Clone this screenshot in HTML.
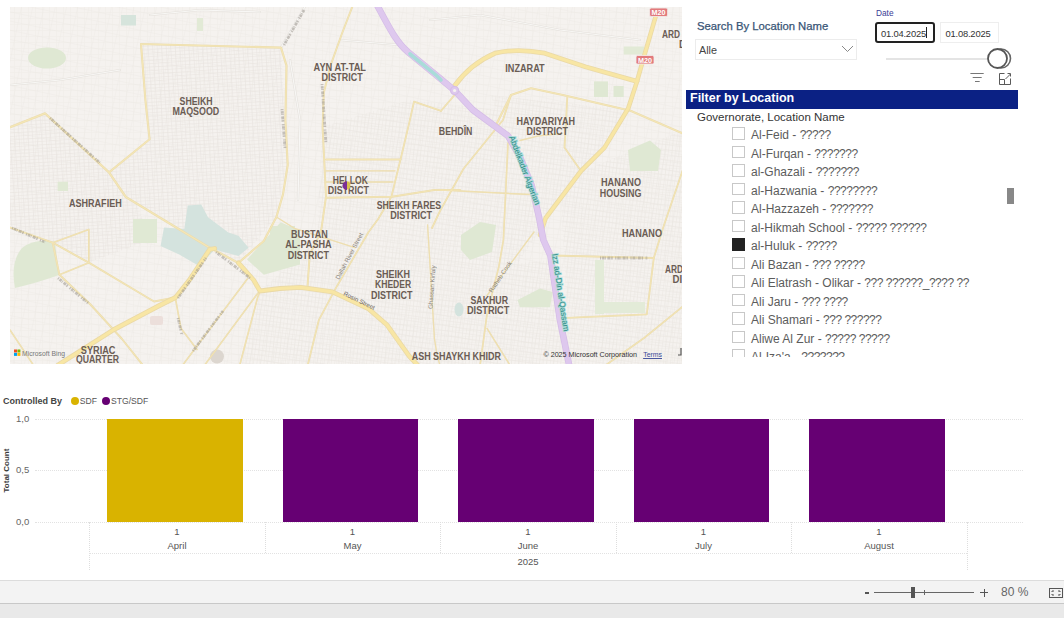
<!DOCTYPE html>
<html><head><meta charset="utf-8">
<style>
*{margin:0;padding:0;box-sizing:border-box}
html,body{width:1064px;height:618px;overflow:hidden;background:#fff;font-family:"Liberation Sans",sans-serif;position:relative}
.a{position:absolute;white-space:nowrap}
#map{position:absolute;left:10px;top:7px;width:672px;height:357px;overflow:hidden;background:#f4f1ed}
#map svg{position:absolute;left:-10px;top:-7px}
.lbl{position:absolute;font-weight:bold;color:#7b6d63;font-size:10px;line-height:10.5px;text-align:center;white-space:nowrap;transform:translateX(-50%)}
.row{position:absolute;left:732px;height:18px;font-size:12px;color:#5c5c5c}
.cb{position:absolute;left:-0.5px;top:0;width:13.5px;height:12.8px;border:1px solid #c8c8c8;background:#fff}
.row span{position:absolute;left:19px;top:1px;white-space:nowrap}
.q{letter-spacing:-0.5px}
.grid{position:absolute;height:0;border-top:1px dotted #e2e2e2}
.vsep{position:absolute;width:0;border-left:1px dotted #dedede}
.bar{position:absolute;top:419px;height:103px;background:#660073}
.xl{position:absolute;font-size:9.5px;color:#555;text-align:center;transform:translateX(-50%);white-space:nowrap}
</style></head>
<body>
<div id="map"><svg width="1064" height="618" viewBox="0 0 1064 618">
<defs><pattern id="st" width="7" height="6" patternUnits="userSpaceOnUse"><path d="M0,0.5H7M0.5,0V6" stroke="#ebe7e2" stroke-width="0.6" fill="none"/></pattern><pattern id="st2" width="11" height="9" patternUnits="userSpaceOnUse" patternTransform="rotate(12)"><path d="M0,0.5H11M0.5,0V9" stroke="#e9e5e0" stroke-width="0.6" fill="none"/></pattern><pattern id="fine" width="4.5" height="3.5" patternUnits="userSpaceOnUse" patternTransform="rotate(-4)"><path d="M0,0.5H4.5M0.5,0V3.5" stroke="#e8e4df" stroke-width="0.55" fill="none"/></pattern><pattern id="fine2" width="3.5" height="5" patternUnits="userSpaceOnUse" patternTransform="rotate(8)"><path d="M0,0.5H3.5M0.5,0V5" stroke="#e8e4df" stroke-width="0.55" fill="none"/></pattern></defs>
<rect x="0" y="0" width="1064" height="618" fill="#f5f2ef"/>
<rect x="0" y="0" width="1064" height="618" fill="url(#st)" opacity="0.55"/>
<rect x="0" y="0" width="1064" height="618" fill="url(#st2)" opacity="0.5"/>
<path d="M141,44 L281,47 L287,165 L276,217 L238,263 L208,247 L137,204 L109,172 L150,139Z M10,125 L45,113 L109,172 L137,204 L150,240 L90,262 L52,243 L10,226Z" fill="url(#fine)" opacity="0.9"/>
<path d="M322,127 L409,100 L500,110 L540,140 L540,230 L500,290 L430,340 L320,330 L260,291 L317,240Z M490,95 L630,110 L600,150 L545,218 L520,157 L508,136Z M260,291 L550,260 L565,366 L240,366Z M560,180 L684,130 L684,366 L570,366Z" fill="url(#fine2)" opacity="0.75"/>
<ellipse cx="47" cy="58" rx="19" ry="10.5" fill="#dfe8d3"/>
<rect x="121" y="15" width="15" height="10.5" fill="#d6e4dc"/>
<path d="M15,288 Q10,262 22,248 Q35,238 55,242 L59,275 Q40,282 15,288Z" fill="#dfe8d3"/>
<rect x="133" y="219" width="24" height="24" fill="#e0e9d4"/>
<path d="M187.7,205.4 L201.2,204.5 L208,217.2 L228.3,232.4 L238.4,235.8 L248.6,247.7 L238.4,256 L214.7,249.4 L199.5,266.3 L179.2,254.4 L160.6,246 L164,227.4 L184.3,229Z" fill="#d4e3de"/>
<path d="M247,259.5 L280.7,222.3 L300,230.8 L300,264.6 L263.8,274.7Z" fill="#dfe8d3"/>
<rect x="594" y="81.4" width="14" height="15.6" fill="#dfe8d3"/>
<rect x="613.5" y="86" width="10.2" height="11" fill="#dfe8d3"/>
<rect x="623.7" y="46.5" width="20.3" height="8" fill="#e2ead6"/>
<path d="M628,150 L650,140.5 L661,150 L658,171 L630,171Z" fill="#dfe8d3"/>
<path d="M461,235 L480,222 L496,225 L492,252 L470,260 L461,250Z" fill="#dfe8d3"/>
<path d="M517.5,300 L540,288.4 L552.8,292 L550,307.2 L520,307.2Z" fill="#dfe8d3"/>
<rect x="595" y="260" width="9" height="54" fill="#e3ebd8"/>
<rect x="595" y="302" width="50" height="11" fill="#e3ebd8"/>
<ellipse cx="459" cy="309.5" rx="4.5" ry="7" fill="#d4e3de"/>
<circle cx="217" cy="356.5" r="7" fill="#dcd6cf"/>
<rect x="150" y="316" width="13" height="9" rx="2" fill="#ecdfdb"/>
<rect x="197" y="18" width="6" height="13" fill="#e2ead6"/>
<rect x="57.6" y="181.7" width="10.4" height="9.3" fill="#e0e9d4"/>
<rect x="270" y="226" width="25" height="14" fill="#dfe8d3"/>
<path d="M306,5 L281,47.6" fill="none" stroke="#e4e0db" stroke-width="2.2" stroke-linecap="round"/>
<path d="M306,5 L281,47.6" fill="none" stroke="#f8f7f5" stroke-width="1.2" stroke-linecap="round"/>
<path d="M10,85 L60,80 L120,70" fill="none" stroke="#e4e0db" stroke-width="2.2" stroke-linecap="round"/>
<path d="M10,85 L60,80 L120,70" fill="none" stroke="#f8f7f5" stroke-width="1.2" stroke-linecap="round"/>
<path d="M150,15 L200,10 L260,12" fill="none" stroke="#e4e0db" stroke-width="2.2" stroke-linecap="round"/>
<path d="M150,15 L200,10 L260,12" fill="none" stroke="#f8f7f5" stroke-width="1.2" stroke-linecap="round"/>
<path d="M340,40 L400,45 L420,60" fill="none" stroke="#e4e0db" stroke-width="2.2" stroke-linecap="round"/>
<path d="M340,40 L400,45 L420,60" fill="none" stroke="#f8f7f5" stroke-width="1.2" stroke-linecap="round"/>
<path d="M430,20 L480,15 L560,30 L640,40" fill="none" stroke="#e4e0db" stroke-width="2.2" stroke-linecap="round"/>
<path d="M430,20 L480,15 L560,30 L640,40" fill="none" stroke="#f8f7f5" stroke-width="1.2" stroke-linecap="round"/>
<path d="M290,60 L300,120 L298,200" fill="none" stroke="#e4e0db" stroke-width="2.2" stroke-linecap="round"/>
<path d="M290,60 L300,120 L298,200" fill="none" stroke="#f8f7f5" stroke-width="1.2" stroke-linecap="round"/>
<path d="M8,128 L45,113.4 L109,172.4 L125.8,197 L137,203.7 L208,246.8 L238.4,262.9" fill="none" stroke="#ebdcae" stroke-width="2.28" stroke-linejoin="round" stroke-linecap="round"/>
<path d="M109,172.4 L149.6,139.3 L145.4,100 L141,44 L281,47.6 L286.5,65.6 L285.4,120 L287.7,165 L283,194.4 L276.4,217 L263.8,241 L238.4,262.9" fill="none" stroke="#ebdcae" stroke-width="2.12" stroke-linejoin="round" stroke-linecap="round"/>
<path d="M10,330 L34,366" fill="none" stroke="#ebdcae" stroke-width="1.64" stroke-linejoin="round" stroke-linecap="round"/>
<path d="M8,226.7 L52.7,242.7 L88.8,262.7 L154,301.5 L175.5,297.5" fill="none" stroke="#ebdcae" stroke-width="1.96" stroke-linejoin="round" stroke-linecap="round"/>
<path d="M52.7,242.7 L59.4,274.8 L90,304 L122,339 L143.5,366" fill="none" stroke="#ebdcae" stroke-width="1.96" stroke-linejoin="round" stroke-linecap="round"/>
<path d="M52.7,242.7 L88.8,229.4 L88.8,262.7 M88.8,262.7 L59.4,274.8" fill="none" stroke="#ebdcae" stroke-width="1.64" stroke-linejoin="round" stroke-linecap="round"/>
<path d="M175.5,298.8 L180.9,328.2 L197,349.5" fill="none" stroke="#ebdcae" stroke-width="1.64" stroke-linejoin="round" stroke-linecap="round"/>
<path d="M182,366 L247.5,278.8" fill="none" stroke="#ebdcae" stroke-width="1.64" stroke-linejoin="round" stroke-linecap="round"/>
<path d="M204,366 L258,293" fill="none" stroke="#ebdcae" stroke-width="1.64" stroke-linejoin="round" stroke-linecap="round"/>
<path d="M239.5,366 L257.6,297.5 L260,291" fill="none" stroke="#ebdcae" stroke-width="1.64" stroke-linejoin="round" stroke-linecap="round"/>
<path d="M353,5 L341.8,34 L330.5,65.6 L323.8,92.7 L322.6,127 L326,196.7 L321.5,228.3 L317,240 L309.7,254.5 L307.5,287" fill="none" stroke="#ebdcae" stroke-width="1.96" stroke-linejoin="round" stroke-linecap="round"/>
<path d="M326,159.5 L400.5,159.5" fill="none" stroke="#ebdcae" stroke-width="2.12" stroke-linejoin="round" stroke-linecap="round"/>
<path d="M326,197.8 L392,196.7 L434.3,190 L460,190" fill="none" stroke="#ebdcae" stroke-width="1.96" stroke-linejoin="round" stroke-linecap="round"/>
<path d="M441,110.8 L414,101.7 L408.5,126 L400.5,159.5 L391.4,196.7 L378,219.3 L368.6,232 L336.9,286.2 L318.8,320.2 L307.5,366" fill="none" stroke="#ebdcae" stroke-width="1.80" stroke-linejoin="round" stroke-linecap="round"/>
<path d="M454.6,95 L441,110.8" fill="none" stroke="#ebdcae" stroke-width="1.80" stroke-linejoin="round" stroke-linecap="round"/>
<path d="M495,127 L511,95 L531,88.2 L562.8,95 L630.5,110.8 L684,134" fill="none" stroke="#ebdcae" stroke-width="2.12" stroke-linejoin="round" stroke-linecap="round"/>
<path d="M511,95 L503,120 L463.5,168.7 L440,211 L432,228" fill="none" stroke="#ebdcae" stroke-width="1.80" stroke-linejoin="round" stroke-linecap="round"/>
<path d="M567.3,97.2 L564.5,147.6 L581,171" fill="none" stroke="#ebdcae" stroke-width="1.80" stroke-linejoin="round" stroke-linecap="round"/>
<path d="M508,143 L503.4,240 L498.7,267.3 L487,314.3 L480,366" fill="none" stroke="#ebdcae" stroke-width="1.64" stroke-linejoin="round" stroke-linecap="round"/>
<path d="M440,190 L531.6,194.6" fill="none" stroke="#ebdcae" stroke-width="1.48" stroke-linejoin="round" stroke-linecap="round"/>
<path d="M684,166.4 L663.2,227.5 L653.8,258 L646.8,314.3 L566.9,317.8" fill="none" stroke="#ebdcae" stroke-width="1.80" stroke-linejoin="round" stroke-linecap="round"/>
<path d="M552.8,255.5 L653.8,258" fill="none" stroke="#ebdcae" stroke-width="1.80" stroke-linejoin="round" stroke-linecap="round"/>
<path d="M684,305.5 L644.4,337.8 L604.5,366" fill="none" stroke="#ebdcae" stroke-width="1.80" stroke-linejoin="round" stroke-linecap="round"/>
<path d="M487,295.5 L534,232" fill="none" stroke="#ebdcae" stroke-width="1.32" stroke-linejoin="round" stroke-linecap="round"/>
<path d="M487,328.4 L510.5,366" fill="none" stroke="#ebdcae" stroke-width="1.48" stroke-linejoin="round" stroke-linecap="round"/>
<path d="M427.6,225 L434.4,338.3 L436.6,351.9 L440,366" fill="none" stroke="#ebdcae" stroke-width="1.32" stroke-linejoin="round" stroke-linecap="round"/>
<path d="M276.4,217 L294.4,228.3 L355,247.7" fill="none" stroke="#ebdcae" stroke-width="1.32" stroke-linejoin="round" stroke-linecap="round"/>
<path d="M326,170.8 L395,170.8 M326,182 L393,182" fill="none" stroke="#ebdcae" stroke-width="1.32" stroke-linejoin="round" stroke-linecap="round"/>
<path d="M520,140.5 L538.7,135.8 L562,133.5" fill="none" stroke="#ebdcae" stroke-width="1.32" stroke-linejoin="round" stroke-linecap="round"/>
<path d="M8,128 L45,113.4 L109,172.4 L125.8,197 L137,203.7 L208,246.8 L238.4,262.9" fill="none" stroke="#f4e6b6" stroke-width="1.28" stroke-linejoin="round" stroke-linecap="round"/>
<path d="M109,172.4 L149.6,139.3 L145.4,100 L141,44 L281,47.6 L286.5,65.6 L285.4,120 L287.7,165 L283,194.4 L276.4,217 L263.8,241 L238.4,262.9" fill="none" stroke="#f4e6b6" stroke-width="1.12" stroke-linejoin="round" stroke-linecap="round"/>
<path d="M10,330 L34,366" fill="none" stroke="#f4e6b6" stroke-width="0.64" stroke-linejoin="round" stroke-linecap="round"/>
<path d="M8,226.7 L52.7,242.7 L88.8,262.7 L154,301.5 L175.5,297.5" fill="none" stroke="#f4e6b6" stroke-width="0.96" stroke-linejoin="round" stroke-linecap="round"/>
<path d="M52.7,242.7 L59.4,274.8 L90,304 L122,339 L143.5,366" fill="none" stroke="#f4e6b6" stroke-width="0.96" stroke-linejoin="round" stroke-linecap="round"/>
<path d="M52.7,242.7 L88.8,229.4 L88.8,262.7 M88.8,262.7 L59.4,274.8" fill="none" stroke="#f4e6b6" stroke-width="0.64" stroke-linejoin="round" stroke-linecap="round"/>
<path d="M175.5,298.8 L180.9,328.2 L197,349.5" fill="none" stroke="#f4e6b6" stroke-width="0.64" stroke-linejoin="round" stroke-linecap="round"/>
<path d="M182,366 L247.5,278.8" fill="none" stroke="#f4e6b6" stroke-width="0.64" stroke-linejoin="round" stroke-linecap="round"/>
<path d="M204,366 L258,293" fill="none" stroke="#f4e6b6" stroke-width="0.64" stroke-linejoin="round" stroke-linecap="round"/>
<path d="M239.5,366 L257.6,297.5 L260,291" fill="none" stroke="#f4e6b6" stroke-width="0.64" stroke-linejoin="round" stroke-linecap="round"/>
<path d="M353,5 L341.8,34 L330.5,65.6 L323.8,92.7 L322.6,127 L326,196.7 L321.5,228.3 L317,240 L309.7,254.5 L307.5,287" fill="none" stroke="#f4e6b6" stroke-width="0.96" stroke-linejoin="round" stroke-linecap="round"/>
<path d="M326,159.5 L400.5,159.5" fill="none" stroke="#f4e6b6" stroke-width="1.12" stroke-linejoin="round" stroke-linecap="round"/>
<path d="M326,197.8 L392,196.7 L434.3,190 L460,190" fill="none" stroke="#f4e6b6" stroke-width="0.96" stroke-linejoin="round" stroke-linecap="round"/>
<path d="M441,110.8 L414,101.7 L408.5,126 L400.5,159.5 L391.4,196.7 L378,219.3 L368.6,232 L336.9,286.2 L318.8,320.2 L307.5,366" fill="none" stroke="#f4e6b6" stroke-width="0.80" stroke-linejoin="round" stroke-linecap="round"/>
<path d="M454.6,95 L441,110.8" fill="none" stroke="#f4e6b6" stroke-width="0.80" stroke-linejoin="round" stroke-linecap="round"/>
<path d="M495,127 L511,95 L531,88.2 L562.8,95 L630.5,110.8 L684,134" fill="none" stroke="#f4e6b6" stroke-width="1.12" stroke-linejoin="round" stroke-linecap="round"/>
<path d="M511,95 L503,120 L463.5,168.7 L440,211 L432,228" fill="none" stroke="#f4e6b6" stroke-width="0.80" stroke-linejoin="round" stroke-linecap="round"/>
<path d="M567.3,97.2 L564.5,147.6 L581,171" fill="none" stroke="#f4e6b6" stroke-width="0.80" stroke-linejoin="round" stroke-linecap="round"/>
<path d="M508,143 L503.4,240 L498.7,267.3 L487,314.3 L480,366" fill="none" stroke="#f4e6b6" stroke-width="0.64" stroke-linejoin="round" stroke-linecap="round"/>
<path d="M440,190 L531.6,194.6" fill="none" stroke="#f4e6b6" stroke-width="0.48" stroke-linejoin="round" stroke-linecap="round"/>
<path d="M684,166.4 L663.2,227.5 L653.8,258 L646.8,314.3 L566.9,317.8" fill="none" stroke="#f4e6b6" stroke-width="0.80" stroke-linejoin="round" stroke-linecap="round"/>
<path d="M552.8,255.5 L653.8,258" fill="none" stroke="#f4e6b6" stroke-width="0.80" stroke-linejoin="round" stroke-linecap="round"/>
<path d="M684,305.5 L644.4,337.8 L604.5,366" fill="none" stroke="#f4e6b6" stroke-width="0.80" stroke-linejoin="round" stroke-linecap="round"/>
<path d="M487,295.5 L534,232" fill="none" stroke="#f4e6b6" stroke-width="0.32" stroke-linejoin="round" stroke-linecap="round"/>
<path d="M487,328.4 L510.5,366" fill="none" stroke="#f4e6b6" stroke-width="0.48" stroke-linejoin="round" stroke-linecap="round"/>
<path d="M427.6,225 L434.4,338.3 L436.6,351.9 L440,366" fill="none" stroke="#f4e6b6" stroke-width="0.32" stroke-linejoin="round" stroke-linecap="round"/>
<path d="M276.4,217 L294.4,228.3 L355,247.7" fill="none" stroke="#f4e6b6" stroke-width="0.32" stroke-linejoin="round" stroke-linecap="round"/>
<path d="M326,170.8 L395,170.8 M326,182 L393,182" fill="none" stroke="#f4e6b6" stroke-width="0.32" stroke-linejoin="round" stroke-linecap="round"/>
<path d="M520,140.5 L538.7,135.8 L562,133.5" fill="none" stroke="#f4e6b6" stroke-width="0.32" stroke-linejoin="round" stroke-linecap="round"/>
<path d="M58,365 L114,329.5 L159.5,305.5 L175.5,297.5 L189.4,280 L209.7,249.4 L214.7,248.5" fill="none" stroke="#ead9a6" stroke-width="4.81" stroke-linejoin="round" stroke-linecap="round"/>
<path d="M238.4,262.9 L253.6,280 L260,291 L280,288.5 L300.7,287.3 L332.4,291.9 L368.6,308.9 L386.8,324.7 L409.4,356.4 L418.5,366" fill="none" stroke="#ead9a6" stroke-width="4.81" stroke-linejoin="round" stroke-linecap="round"/>
<path d="M454.5,86 Q470,64 495,53.2 Q517,48 544.7,53.2 L585.3,66.8 L637,81.4" fill="none" stroke="#ead9a6" stroke-width="4.81" stroke-linejoin="round" stroke-linecap="round"/>
<path d="M656.4,13.8 L644,56.6 L637,81.4 L628.2,108.5 L604.5,147.6 L581,171 L545.7,218 L540,235" fill="none" stroke="#ead9a6" stroke-width="4.60" stroke-linejoin="round" stroke-linecap="round"/>
<path d="M58,365 L114,329.5 L159.5,305.5 L175.5,297.5 L189.4,280 L209.7,249.4 L214.7,248.5" fill="none" stroke="#f8e6a4" stroke-width="3.21" stroke-linejoin="round" stroke-linecap="round"/>
<path d="M238.4,262.9 L253.6,280 L260,291 L280,288.5 L300.7,287.3 L332.4,291.9 L368.6,308.9 L386.8,324.7 L409.4,356.4 L418.5,366" fill="none" stroke="#f8e6a4" stroke-width="3.21" stroke-linejoin="round" stroke-linecap="round"/>
<path d="M454.5,86 Q470,64 495,53.2 Q517,48 544.7,53.2 L585.3,66.8 L637,81.4" fill="none" stroke="#f8e6a4" stroke-width="3.21" stroke-linejoin="round" stroke-linecap="round"/>
<path d="M656.4,13.8 L644,56.6 L637,81.4 L628.2,108.5 L604.5,147.6 L581,171 L545.7,218 L540,235" fill="none" stroke="#f8e6a4" stroke-width="3.00" stroke-linejoin="round" stroke-linecap="round"/>
<path d="M377,5 C389,27 396,42 408,52 L436,75 L454.6,90.5 L472.9,110 L508,135.8 L520,157 L531.6,185.2 L538.7,215.7 L543.4,240 L550.4,255.5 L559.8,319 L569.5,367" fill="none" stroke="#d4bce6" stroke-width="6.6" stroke-linejoin="round" stroke-linecap="round"/>
<path d="M377,5 C389,27 396,42 408,52 L436,75 L454.6,90.5 L472.9,110 L508,135.8 L520,157 L531.6,185.2 L538.7,215.7 L543.4,240 L550.4,255.5 L559.8,319 L569.5,367" fill="none" stroke="#dec8ee" stroke-width="5.2" stroke-linejoin="round" stroke-linecap="round"/>
<circle cx="454.6" cy="90.5" r="4" fill="#dec8ee" stroke="#d4bce6" stroke-width="1.2"/><circle cx="454.6" cy="90.5" r="1.6" fill="#f5f2ef"/>
<path d="M410,54 L436,75 L441,80" stroke="#a9dcd9" stroke-width="3.6" stroke-linecap="round" fill="none"/>
<path d="M50,118 L100,163" fill="none" stroke="#9d978f" stroke-width="2.8" stroke-dasharray="1.2 0.9 2.5 0.6 0.8 1.4 3 0.8 1.5 2.5" opacity="0.55"/>
<path d="M12,228 L45,242" fill="none" stroke="#9d978f" stroke-width="2.8" stroke-dasharray="1.2 0.9 2.5 0.6 0.8 1.4 3 0.8 1.5 2.5" opacity="0.55"/>
<path d="M58,278 L88,303" fill="none" stroke="#9d978f" stroke-width="2.8" stroke-dasharray="1.2 0.9 2.5 0.6 0.8 1.4 3 0.8 1.5 2.5" opacity="0.55"/>
<path d="M178,298 L206,258" fill="none" stroke="#9d978f" stroke-width="2.8" stroke-dasharray="1.2 0.9 2.5 0.6 0.8 1.4 3 0.8 1.5 2.5" opacity="0.55"/>
<path d="M216,252 L250,278" fill="none" stroke="#9d978f" stroke-width="2.8" stroke-dasharray="1.2 0.9 2.5 0.6 0.8 1.4 3 0.8 1.5 2.5" opacity="0.55"/>
<path d="M193,351 L223,311" fill="none" stroke="#9d978f" stroke-width="2.8" stroke-dasharray="1.2 0.9 2.5 0.6 0.8 1.4 3 0.8 1.5 2.5" opacity="0.55"/>
<path d="M282,109 L285,148" fill="none" stroke="#9d978f" stroke-width="2.8" stroke-dasharray="1.2 0.9 2.5 0.6 0.8 1.4 3 0.8 1.5 2.5" opacity="0.55"/>
<path d="M322,84 L326,144" fill="none" stroke="#9d978f" stroke-width="2.8" stroke-dasharray="1.2 0.9 2.5 0.6 0.8 1.4 3 0.8 1.5 2.5" opacity="0.55"/>
<path d="M284,45 L304,10" fill="none" stroke="#9d978f" stroke-width="2.8" stroke-dasharray="1.2 0.9 2.5 0.6 0.8 1.4 3 0.8 1.5 2.5" opacity="0.55"/>
<path d="M600,258 L648,258" fill="none" stroke="#9d978f" stroke-width="2.8" stroke-dasharray="1.2 0.9 2.5 0.6 0.8 1.4 3 0.8 1.5 2.5" opacity="0.55"/>
<path d="M178,318 L182,335" fill="none" stroke="#9d978f" stroke-width="2.8" stroke-dasharray="1.2 0.9 2.5 0.6 0.8 1.4 3 0.8 1.5 2.5" opacity="0.55"/>
<rect x="649.6" y="8" width="18" height="8.5" rx="1.5" fill="#e27a7c" stroke="#f3f0ee" stroke-width="0.8"/>
<text x="658.6" y="15" font-family="Liberation Sans" font-size="7" font-weight="bold" fill="#fff" text-anchor="middle" textLength="14" lengthAdjust="spacingAndGlyphs">M20</text>
<rect x="636" y="55.5" width="18" height="8.5" rx="1.5" fill="#e27a7c" stroke="#f3f0ee" stroke-width="0.8"/>
<text x="645" y="62.5" font-family="Liberation Sans" font-size="7" font-weight="bold" fill="#fff" text-anchor="middle" textLength="14" lengthAdjust="spacingAndGlyphs">M20</text>
<text x="343" y="295" font-family="Liberation Sans" font-size="6.2" fill="#6f6a60" transform="rotate(26 343 295)">Rosin Street</text>
<text x="339" y="280" font-family="Liberation Sans" font-size="6.2" fill="#8a857c" transform="rotate(-62 339 280)">Dallah River Street</text>
<text x="432.5" y="309" font-family="Liberation Sans" font-size="6.2" fill="#8a857c" transform="rotate(-86 432.5 309)">Ghassan Kirfaly</text>
<text x="492" y="293" font-family="Liberation Sans" font-size="6.2" fill="#8a857c" transform="rotate(-56 492 293)">Ratheb Cook</text>
<text x="509" y="137" font-family="Liberation Sans" font-size="8.2" fill="#2f8a86" stroke="#aadcd8" stroke-width="1.6" paint-order="stroke" transform="rotate(69 509 137)">Abdelkader Algerian</text>
<text x="552" y="254" font-family="Liberation Sans" font-size="8.2" fill="#2f8a86" stroke="#aadcd8" stroke-width="1.6" paint-order="stroke" transform="rotate(81.5 552 254)">Izz ad-Din al-Qassam</text>
<text x="179.6" y="104.8" font-family="Liberation Sans" font-size="10.2" font-weight="bold" fill="#6a5c54" textLength="33.099999999999994" lengthAdjust="spacingAndGlyphs" stroke="#f5f3f0" stroke-width="0" >SHEIKH</text>
<text x="172.4" y="115" font-family="Liberation Sans" font-size="10.2" font-weight="bold" fill="#6a5c54" textLength="46.900000000000006" lengthAdjust="spacingAndGlyphs" stroke="#f5f3f0" stroke-width="0" >MAQSOOD</text>
<text x="313.6" y="71.3" font-family="Liberation Sans" font-size="10.2" font-weight="bold" fill="#6a5c54" textLength="52.39999999999998" lengthAdjust="spacingAndGlyphs" stroke="#f5f3f0" stroke-width="0" >AYN AT-TAL</text>
<text x="321.5" y="81.4" font-family="Liberation Sans" font-size="10.2" font-weight="bold" fill="#6a5c54" textLength="41.10000000000002" lengthAdjust="spacingAndGlyphs" stroke="#f5f3f0" stroke-width="0" >DISTRICT</text>
<text x="505.3" y="72.4" font-family="Liberation Sans" font-size="10.2" font-weight="bold" fill="#6a5c54" textLength="39.400000000000034" lengthAdjust="spacingAndGlyphs" stroke="#f5f3f0" stroke-width="0" >INZARAT</text>
<text x="662" y="37.5" font-family="Liberation Sans" font-size="10.2" font-weight="bold" fill="#6a5c54" textLength="18" lengthAdjust="spacingAndGlyphs" stroke="#f5f3f0" stroke-width="0" >ARD</text>
<text x="679" y="47.6" font-family="Liberation Sans" font-size="10.2" font-weight="bold" fill="#6a5c54" textLength="6.899999999999977" lengthAdjust="spacingAndGlyphs" stroke="#f5f3f0" stroke-width="0" >D</text>
<text x="516.4" y="124.6" font-family="Liberation Sans" font-size="10.2" font-weight="bold" fill="#6a5c54" textLength="58.60000000000002" lengthAdjust="spacingAndGlyphs" stroke="#f5f3f0" stroke-width="0" >HAYDARIYAH</text>
<text x="526.5" y="134.7" font-family="Liberation Sans" font-size="10.2" font-weight="bold" fill="#6a5c54" textLength="41.5" lengthAdjust="spacingAndGlyphs" stroke="#f5f3f0" stroke-width="0" >DISTRICT</text>
<text x="438.8" y="134.5" font-family="Liberation Sans" font-size="10.2" font-weight="bold" fill="#6a5c54" textLength="33.599999999999966" lengthAdjust="spacingAndGlyphs" stroke="#f5f3f0" stroke-width="0" >BEHD&#206;N</text>
<text x="332.8" y="183.6" font-family="Liberation Sans" font-size="10.2" font-weight="bold" fill="#6a5c54" textLength="35.0" lengthAdjust="spacingAndGlyphs" stroke="#f5f3f0" stroke-width="0" >HELLOK</text>
<text x="327.8" y="194" font-family="Liberation Sans" font-size="10.2" font-weight="bold" fill="#6a5c54" textLength="41.099999999999966" lengthAdjust="spacingAndGlyphs" stroke="#f5f3f0" stroke-width="0" >DISTRICT</text>
<text x="69" y="206.5" font-family="Liberation Sans" font-size="10.2" font-weight="bold" fill="#6a5c54" textLength="52.7" lengthAdjust="spacingAndGlyphs" stroke="#f5f3f0" stroke-width="0" >ASHRAFIEH</text>
<text x="376.8" y="209" font-family="Liberation Sans" font-size="10.2" font-weight="bold" fill="#6a5c54" textLength="64.19999999999999" lengthAdjust="spacingAndGlyphs" stroke="#f5f3f0" stroke-width="0" >SHEIKH FARES</text>
<text x="390.3" y="219.3" font-family="Liberation Sans" font-size="10.2" font-weight="bold" fill="#6a5c54" textLength="41.69999999999999" lengthAdjust="spacingAndGlyphs" stroke="#f5f3f0" stroke-width="0" >DISTRICT</text>
<text x="601" y="186.4" font-family="Liberation Sans" font-size="10.2" font-weight="bold" fill="#6a5c54" textLength="40" lengthAdjust="spacingAndGlyphs" stroke="#f5f3f0" stroke-width="0" >HANANO</text>
<text x="599.8" y="197" font-family="Liberation Sans" font-size="10.2" font-weight="bold" fill="#6a5c54" textLength="41.60000000000002" lengthAdjust="spacingAndGlyphs" stroke="#f5f3f0" stroke-width="0" >HOUSING</text>
<text x="622" y="236.8" font-family="Liberation Sans" font-size="10.2" font-weight="bold" fill="#6a5c54" textLength="40" lengthAdjust="spacingAndGlyphs" stroke="#f5f3f0" stroke-width="0" >HANANO</text>
<text x="290.9" y="238" font-family="Liberation Sans" font-size="10.2" font-weight="bold" fill="#6a5c54" textLength="36.900000000000034" lengthAdjust="spacingAndGlyphs" stroke="#f5f3f0" stroke-width="0" >BUSTAN</text>
<text x="285.2" y="248.1" font-family="Liberation Sans" font-size="10.2" font-weight="bold" fill="#6a5c54" textLength="46.5" lengthAdjust="spacingAndGlyphs" stroke="#f5f3f0" stroke-width="0" >AL-PASHA</text>
<text x="287.7" y="258.5" font-family="Liberation Sans" font-size="10.2" font-weight="bold" fill="#6a5c54" textLength="41.30000000000001" lengthAdjust="spacingAndGlyphs" stroke="#f5f3f0" stroke-width="0" >DISTRICT</text>
<text x="376" y="277.8" font-family="Liberation Sans" font-size="10.2" font-weight="bold" fill="#6a5c54" textLength="34" lengthAdjust="spacingAndGlyphs" stroke="#f5f3f0" stroke-width="0" >SHEIKH</text>
<text x="375" y="288" font-family="Liberation Sans" font-size="10.2" font-weight="bold" fill="#6a5c54" textLength="36.19999999999999" lengthAdjust="spacingAndGlyphs" stroke="#f5f3f0" stroke-width="0" >KHEDER</text>
<text x="371" y="298.7" font-family="Liberation Sans" font-size="10.2" font-weight="bold" fill="#6a5c54" textLength="41.39999999999998" lengthAdjust="spacingAndGlyphs" stroke="#f5f3f0" stroke-width="0" >DISTRICT</text>
<text x="665" y="273" font-family="Liberation Sans" font-size="10.2" font-weight="bold" fill="#6a5c54" textLength="18" lengthAdjust="spacingAndGlyphs" stroke="#f5f3f0" stroke-width="0" >ARD</text>
<text x="672.6" y="283.3" font-family="Liberation Sans" font-size="10.2" font-weight="bold" fill="#6a5c54" textLength="9.600000000000023" lengthAdjust="spacingAndGlyphs" stroke="#f5f3f0" stroke-width="0" >DI</text>
<text x="470.5" y="304.2" font-family="Liberation Sans" font-size="10.2" font-weight="bold" fill="#6a5c54" textLength="37.5" lengthAdjust="spacingAndGlyphs" stroke="#f5f3f0" stroke-width="0" >SAKHUR</text>
<text x="467" y="313.8" font-family="Liberation Sans" font-size="10.2" font-weight="bold" fill="#6a5c54" textLength="42.30000000000001" lengthAdjust="spacingAndGlyphs" stroke="#f5f3f0" stroke-width="0" >DISTRICT</text>
<text x="80.8" y="353.5" font-family="Liberation Sans" font-size="10.2" font-weight="bold" fill="#6a5c54" textLength="34.7" lengthAdjust="spacingAndGlyphs" stroke="#f5f3f0" stroke-width="0" >SYRIAC</text>
<text x="76" y="363.4" font-family="Liberation Sans" font-size="10.2" font-weight="bold" fill="#6a5c54" textLength="43" lengthAdjust="spacingAndGlyphs" stroke="#f5f3f0" stroke-width="0" >QUARTER</text>
<text x="411.7" y="360.2" font-family="Liberation Sans" font-size="10.2" font-weight="bold" fill="#6a5c54" textLength="89.30000000000001" lengthAdjust="spacingAndGlyphs" stroke="#f5f3f0" stroke-width="0" >ASH SHAYKH KHIDR</text>
<text x="543.4" y="357" font-family="Liberation Sans" font-size="7.2" fill="#333" textLength="93.6" lengthAdjust="spacingAndGlyphs">&#169; 2025 Microsoft Corporation</text>
<text x="643.2" y="357" font-family="Liberation Sans" font-size="7.2" fill="#3b4a9a" textLength="18.8" lengthAdjust="spacingAndGlyphs" text-decoration="underline">Terms</text>
<line x1="643.2" y1="358.5" x2="662" y2="358.5" stroke="#3b4a9a" stroke-width="0.7"/>
<rect x="14" y="349.5" width="3" height="3" fill="#f25022"/><rect x="17.4" y="349.5" width="3" height="3" fill="#7fba00"/><rect x="14" y="352.9" width="3" height="3" fill="#00a4ef"/><rect x="17.4" y="352.9" width="3" height="3" fill="#ffb900"/>
<text x="22" y="355.5" font-family="Liberation Sans" font-size="6.5" fill="#777" textLength="43" lengthAdjust="spacingAndGlyphs">Microsoft Bing</text>
<path d="M681,348 V355 H678" stroke="#555" stroke-width="1.2" fill="none"/>
<path d="M347,181.2 A4.5,4.4 0 0,0 347,190 Z" fill="#7a2f96"/><path d="M347,181.6 A3.4,3.9 0 0,1 347,189.4 Z" fill="#d6c04e"/>
</svg></div><!--mapend-->

<!-- slicer: search by location -->
<div class="a" style="left:697px;top:20px;font-size:11.3px;color:#395576;-webkit-text-stroke:0.25px #395576">Search By Location Name</div>
<div class="a" style="left:695px;top:39px;width:162px;height:21px;border:1px solid #ececec;background:#fff"></div>
<div class="a" style="left:699px;top:43.5px;font-size:10.8px;color:#444">Alle</div>
<svg class="a" style="left:840px;top:44px" width="16" height="10"><polyline points="2,2 7.5,7.5 13,2" fill="none" stroke="#888" stroke-width="1"/></svg>

<!-- date slicer -->
<div class="a" style="left:876px;top:7.5px;font-size:8.3px;color:#3a3d95">Date</div>
<div class="a" style="left:875px;top:22px;width:60px;height:21px;border:2px solid #222;border-radius:3px;background:#fff"></div>
<div class="a" style="left:881px;top:27.5px;font-size:9.4px;color:#333;letter-spacing:-0.2px">01.04.2025</div><div class="a" style="left:926px;top:27px;width:1px;height:11px;background:#222"></div>
<div class="a" style="left:940px;top:22px;width:59px;height:21px;border:1px solid #eeeeee;background:#fff"></div>
<div class="a" style="left:945.5px;top:27.5px;font-size:9.4px;color:#333;letter-spacing:-0.2px">01.08.2025</div>
<div class="a" style="left:886px;top:58px;width:104px;height:2px;background:#e4e4e4"></div>
<svg class="a" style="left:980px;top:44px" width="36" height="30">
 <circle cx="21" cy="14.5" r="9.5" fill="#fff" stroke="#666" stroke-width="1.6"/>
 <circle cx="17.5" cy="14.5" r="9.5" fill="#fff" stroke="#555" stroke-width="1.8"/>
</svg>
<svg class="a" style="left:968px;top:70px" width="50" height="18">
 <g stroke="#777" stroke-width="1" fill="none">
 <line x1="2.4" y1="3.5" x2="15.7" y2="3.5"/><line x1="4.7" y1="7.5" x2="13.7" y2="7.5"/><line x1="7" y1="11.5" x2="11.7" y2="11.5"/>
 </g>
 <g stroke="#5a5a5a" stroke-width="1" fill="none">
 <path d="M36.5,3.5 H31.5 V14.5 H42.5 V8.5"/><path d="M31.5,9.5 H36.5 V14.5"/><path d="M37.5,9 L42.5,4 M39.5,3.5 H42.5 V6.5"/>
 </g>
</svg>

<!-- filter by location -->
<div class="a" style="left:686px;top:90px;width:332px;height:19px;background:#0b2184"></div>
<div class="a" style="left:690px;top:91px;font-size:12.5px;font-weight:bold;color:#fff">Filter by Location</div>
<div class="a" style="left:697px;top:111px;font-size:11.5px;color:#333">Governorate, Location Name</div>
<div class="a" style="left:1007px;top:188px;width:7px;height:16px;background:#888"></div>

<div class="row" style="top:127px"><div class="cb"></div><span>Al-Feid - <i class="q" style="font-style:normal">?????</i></span></div>
<div class="row" style="top:145.5px"><div class="cb"></div><span>Al-Furqan - <i class="q" style="font-style:normal">???????</i></span></div>
<div class="row" style="top:164px"><div class="cb"></div><span>al-Ghazali - <i class="q" style="font-style:normal">???????</i></span></div>
<div class="row" style="top:182.5px"><div class="cb"></div><span>al-Hazwania - <i class="q" style="font-style:normal">????????</i></span></div>
<div class="row" style="top:201px"><div class="cb"></div><span>Al-Hazzazeh - <i class="q" style="font-style:normal">???????</i></span></div>
<div class="row" style="top:219.5px"><div class="cb"></div><span>al-Hikmah School - <i class="q" style="font-style:normal">????? ??????</i></span></div>
<div class="row" style="top:238px"><div class="cb" style="background:#222;border-color:#222"></div><span>al-Huluk - <i class="q" style="font-style:normal">?????</i></span></div>
<div class="row" style="top:256.5px"><div class="cb"></div><span>Ali Bazan - <i class="q" style="font-style:normal">??? ?????</i></span></div>
<div class="row" style="top:275px"><div class="cb"></div><span>Ali Elatrash - Olikar - <i class="q" style="font-style:normal">??? ??????_???? ??</i></span></div>
<div class="row" style="top:293.5px"><div class="cb"></div><span>Ali Jaru - <i class="q" style="font-style:normal">??? ????</i></span></div>
<div class="row" style="top:312px"><div class="cb"></div><span>Ali Shamari - <i class="q" style="font-style:normal">??? ??????</i></span></div>
<div class="row" style="top:330.5px"><div class="cb"></div><span>Aliwe Al Zur - <i class="q" style="font-style:normal">????? ?????</i></span></div>
<div class="a" style="left:720px;top:347px;width:300px;height:10px;overflow:hidden">
 <div class="row" style="top:2px;left:12px"><div class="cb"></div><span>Al-Iza'a - <i class="q" style="font-style:normal">???????</i></span></div>
</div>

<!-- chart -->
<div class="a" style="left:3px;top:395.5px;font-size:9px;font-weight:bold;color:#444">Controlled By</div>
<div class="a" style="left:71px;top:397px;width:8px;height:8px;border-radius:50%;background:#d9b300"></div>
<div class="a" style="left:79.7px;top:396px;font-size:8.6px;color:#555">SDF</div>
<div class="a" style="left:102px;top:397px;width:8px;height:8px;border-radius:50%;background:#660073"></div>
<div class="a" style="left:111px;top:396px;font-size:8.6px;color:#555">STG/SDF</div>

<div class="a" style="left:-24px;top:465.5px;font-size:8px;font-weight:bold;color:#3a3a3a;transform:rotate(-90deg);width:60px;text-align:center">Total Count</div>
<div class="a" style="left:16px;top:413px;font-size:9.5px;color:#666">1,0</div>
<div class="a" style="left:16px;top:464px;font-size:9.5px;color:#666">0,5</div>
<div class="a" style="left:16px;top:516px;font-size:9.5px;color:#666">0,0</div>

<div class="grid" style="left:35px;top:419px;width:988px"></div>
<div class="grid" style="left:35px;top:470px;width:988px"></div>
<div class="grid" style="left:35px;top:522px;width:988px"></div>

<div class="bar" style="left:107px;width:135.5px;background:#d9b300"></div>
<div class="bar" style="left:282.5px;width:135.5px"></div>
<div class="bar" style="left:458px;width:135.5px"></div>
<div class="bar" style="left:633.5px;width:135.5px"></div>
<div class="bar" style="left:809px;width:135.5px"></div>

<div class="vsep" style="left:89px;top:522px;height:48px"></div>
<div class="vsep" style="left:265px;top:522px;height:31px"></div>
<div class="vsep" style="left:440px;top:522px;height:31px"></div>
<div class="vsep" style="left:616px;top:522px;height:31px"></div>
<div class="vsep" style="left:791px;top:522px;height:31px"></div>
<div class="vsep" style="left:967px;top:522px;height:48px"></div>
<div class="grid" style="left:89px;top:553px;width:878px"></div>

<div class="xl" style="left:177px;top:525.5px">1</div><div class="xl" style="left:177px;top:540px">April</div>
<div class="xl" style="left:352.5px;top:525.5px">1</div><div class="xl" style="left:352.5px;top:540px">May</div>
<div class="xl" style="left:528px;top:525.5px">1</div><div class="xl" style="left:528px;top:540px">June</div>
<div class="xl" style="left:703.5px;top:525.5px">1</div><div class="xl" style="left:703.5px;top:540px">July</div>
<div class="xl" style="left:879px;top:525.5px">1</div><div class="xl" style="left:879px;top:540px">August</div>
<div class="xl" style="left:528px;top:556px">2025</div>

<!-- bottom bar -->
<div class="a" style="left:0;top:580px;width:1064px;height:24px;background:#f3f3f3;border-top:1px solid #dcdcdc"></div>
<div class="a" style="left:0;top:603px;width:1064px;height:15px;background:#e9e9e9;border-top:1px solid #c8c8c8"></div>
<div class="a" style="left:865px;top:592px;width:4px;height:1.5px;background:#555"></div>
<div class="a" style="left:874px;top:592px;width:100px;height:1px;background:#666"></div>
<div class="a" style="left:911px;top:587px;width:4px;height:11px;background:#555"></div>
<div class="a" style="left:924px;top:590px;width:1px;height:5px;background:#666"></div>
<div class="a" style="left:980px;top:592px;width:8px;height:1.2px;background:#555"></div>
<div class="a" style="left:983.5px;top:588.5px;width:1.2px;height:8px;background:#555"></div>
<div class="a" style="left:1001px;top:585px;font-size:12px;color:#666">80 %</div>
<svg class="a" style="left:1048px;top:587px" width="16" height="12"><rect x="1.5" y="1.5" width="13" height="9" fill="none" stroke="#555" stroke-width="1"/><path d="M4 5V4H6 M10 4H12V5 M12 7V8H10 M6 8H4V7" stroke="#555" fill="none" stroke-width="1"/></svg>
</body></html>
